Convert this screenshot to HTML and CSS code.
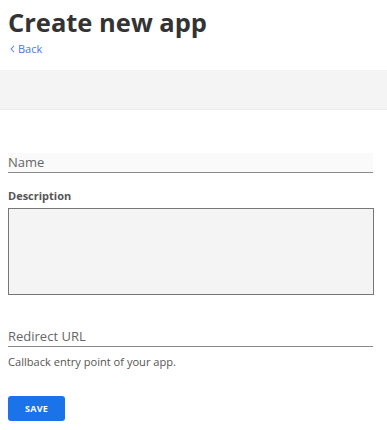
FILE: index.html
```html
<!DOCTYPE html>
<html>
<head>
<meta charset="utf-8">
<link rel="stylesheet" href="styles.css">
</head>
<body>
<header class="page-head">
  <h1 class="title">Create new app</h1>
  <a class="back" href="#"><svg class="chev" width="5" height="8" viewBox="0 0 5 8"><path d="M4 0.8 L1 4 L4 7.2" fill="none" stroke="currentColor" stroke-width="1.1"/></svg>Back</a>
</header>
<div class="band"></div>
<form class="form">
  <div class="field field-name">
    <input class="line-input name-input" type="text" placeholder="Name">
  </div>
  <div class="field field-desc">
    <label class="label">Description</label>
    <textarea class="area"></textarea>
  </div>
  <div class="field field-url">
    <input class="line-input url-input" type="text" placeholder="Redirect URL">
    <p class="help">Callback entry point of your app.</p>
  </div>
  <button class="save" type="button">SAVE</button>
</form>
</body>
</html>
```
FILE: styles.css
```css
html, body {
  margin: 0;
  padding: 0;
  background: #fff;
}
body {
  font-family: "Open Sans", "Noto Sans", sans-serif;
  color: #333;
}
.page-head {
  padding: 4px 8px 0;
  height: 66px;
  box-sizing: border-box;
}
.title {
  margin: 0;
  font-size: 25.5px;
  font-weight: 700;
  line-height: 36px;
  color: #333;
}
.back {
  display: flex;
  align-items: center;
  gap: 3px;
  margin-top: 1px;
  font-size: 11px;
  line-height: 15px;
  color: #3f7be0;
  text-decoration: none;
  padding-left: 2px;
}
.chev {
  color: #7a8fd8;
}
.band {
  height: 39px;
  margin-top: 4px;
  background: #f4f4f4;
  border-bottom: 1px solid #ececec;
}
.form {
  padding: 43px 14px 0 8px;
  display: flex;
  flex-direction: column;
}
.field {
  display: flex;
  flex-direction: column;
}
.line-input {
  display: block;
  width: 100%;
  box-sizing: border-box;
  height: 20px;
  border: 0;
  border-bottom: 1px solid #8a8a8a;
  padding: 0 0 1px 0;
  font-family: "Open Sans", "Noto Sans", sans-serif;
  font-size: 13px;
  color: #333;
  outline: none;
}
.line-input::placeholder {
  color: #666;
}
.name-input {
  background: #fafafa;
}
.url-input {
  background: #fff;
}
.field-desc {
  margin-top: 15px;
}
.label {
  font-size: 11px;
  font-weight: 700;
  line-height: 16px;
  color: #555;
  margin-bottom: 4px;
}
.area {
  display: block;
  width: calc(100% + 1px);
  box-sizing: border-box;
  height: 87px;
  margin: 0;
  background: #f4f4f4;
  border: 1px solid #777;
  resize: none;
  font-family: inherit;
}
.field-url {
  margin-top: 32px;
}
.help {
  margin: 7px 0 0;
  font-size: 11.1px;
  line-height: 15px;
  color: #555;
}
.save {
  margin-top: 27px;
  align-self: flex-start;
  width: 57px;
  height: 25px;
  border: 0;
  border-radius: 3px;
  background: #1a73e8;
  color: #fff;
  font-family: "Open Sans", "Noto Sans", sans-serif;
  font-size: 9px;
  font-weight: 700;
  padding: 0;
  letter-spacing: 0.2px;
}
```
